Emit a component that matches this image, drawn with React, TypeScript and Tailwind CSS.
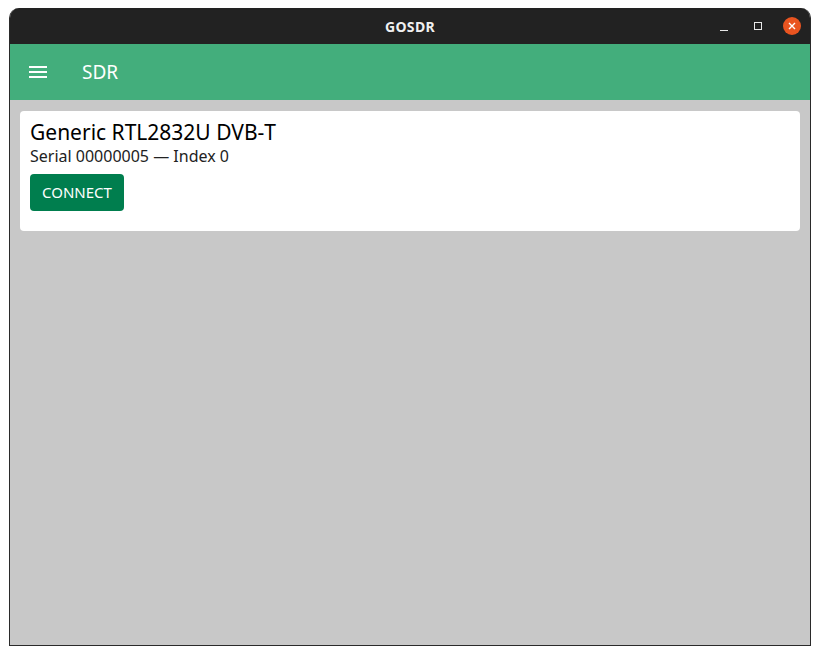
export default function App() {
  return (
    <div className="h-[655px] w-[820px] bg-white pl-[9px] pt-[8px]" style={{ fontFamily: '"Noto Sans", "DejaVu Sans", sans-serif' }}>
      <div className="flex h-[638px] w-[802px] flex-col overflow-hidden rounded-t-[10px] border border-[#2a2a2a] border-t-0 bg-[#c8c8c8]">
        <div className="relative flex h-[36px] shrink-0 items-center justify-center bg-[#222222]">
          <span className="text-[14px] font-bold tracking-wide text-[#f0f0f0]">GOSDR</span>
          <div className="absolute right-[9px] top-0 flex h-full items-center">
            <span className="mt-[9px] block h-[1px] w-[8px] bg-[#e8e8e8]" />
            <span className="ml-[26px] block h-[8px] w-[8px] border border-[#e8e8e8]" />
            <span className="ml-[21px] flex h-[18px] w-[18px] items-center justify-center rounded-full bg-[#e95420]">
              <svg width="8" height="8" viewBox="0 0 8 8" stroke="white" strokeWidth="1.4">
                <path d="M1 1L7 7M7 1L1 7" />
              </svg>
            </span>
          </div>
        </div>
        <div className="flex h-[56px] shrink-0 items-center bg-[#43ae7c] px-[19px] text-white">
          <svg width="18" height="14" viewBox="0 0 18 14" fill="white" className="mr-[35px]">
            <rect x="0" y="1" width="18" height="2" />
            <rect x="0" y="6" width="18" height="2" />
            <rect x="0" y="11" width="18" height="2" />
          </svg>
          <span className="text-[19px]">SDR</span>
        </div>
        <div className="px-[10px] pt-[11px]">
          <div className="h-[120px] rounded-[4px] bg-white px-[10px] pt-[8px]">
            <div className="text-[21px] leading-[27px] text-black">Generic RTL2832U DVB‑T</div>
            <div className="text-[16px] leading-[20px] text-[#222]">Serial 00000005 — Index 0</div>
            <button className="mt-[8px] h-[37px] rounded-[4px] bg-[#007e4e] px-[12px] text-[15px] text-white">
              CONNECT
            </button>
          </div>
        </div>
      </div>
    </div>
  );
}
